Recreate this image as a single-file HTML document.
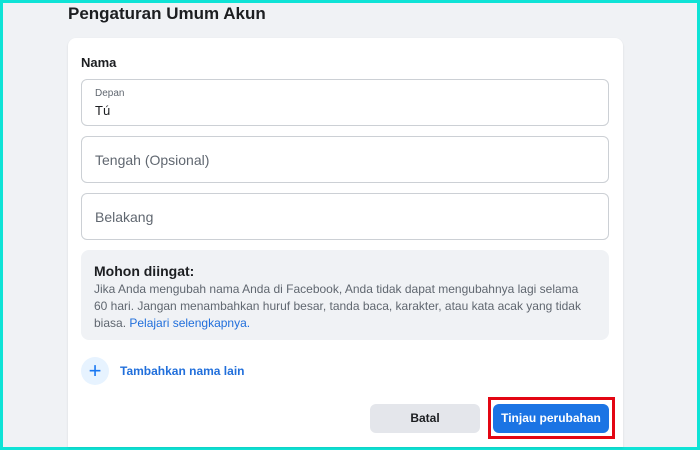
<!DOCTYPE html>
<html><head><style>
*{margin:0;padding:0;box-sizing:border-box}
html,body{width:700px;height:450px;overflow:hidden}
body{background:#0fe3d6;font-family:"Liberation Sans",sans-serif;position:relative}
.bg{position:absolute;left:3px;top:3px;width:694px;height:444px;background:#f0f2f5;overflow:hidden}
.card{position:absolute;left:68px;top:38px;width:555px;height:409px;background:#fff;border-radius:8px 8px 0 0;box-shadow:0 1px 2px rgba(0,0,0,.1)}
h1{position:absolute;left:68px;top:4px;font-size:17px;font-weight:bold;color:#1c1e21}
.lbl{position:absolute;left:81px;top:55px;font-size:13px;font-weight:bold;color:#1c1e21}
.in{position:absolute;left:81px;width:528px;height:47px;border:1px solid #ccd0d5;border-radius:6px;font-size:14px;color:#606770}
.in span{position:absolute;left:13px;top:15px}
.note{position:absolute;left:81px;top:250px;width:528px;height:90px;background:#f0f2f5;border-radius:8px;padding:13px 24px 13px 13px}
.note b{font-size:14px;color:#1c1e21;display:block;margin-bottom:2px}
.note p{font-size:12px;line-height:17px;color:#606770}
.note a{color:#216fdb}
.plus{position:absolute;left:81px;top:357px;width:28px;height:28px;border-radius:50%;background:#e7f3ff;color:#1877f2;font-size:22px;text-align:center;line-height:27px}
.add{position:absolute;left:120px;top:364px;font-size:12px;font-weight:bold;color:#216fdb}
.btn{position:absolute;top:404px;height:29px;border-radius:6px;font-size:12px;font-weight:bold;text-align:center;line-height:29px}
.red{position:absolute;left:488px;top:397px;width:127px;height:42px;border:3px solid #e30613}
</style></head><body>
<div class="bg"></div>
<div class="card"></div>
<h1>Pengaturan Umum Akun</h1>
<div class="lbl">Nama</div>
<div class="in" style="top:79px"><span style="top:8px;font-size:10px">Depan</span><span style="top:23px;color:#1c1e21;font-size:13px">Tú</span></div>
<div class="in" style="top:136px"><span>Tengah (Opsional)</span></div>
<div class="in" style="top:193px"><span>Belakang</span></div>
<div class="note"><b>Mohon diingat:</b><p>Jika Anda mengubah nama Anda di Facebook, Anda tidak dapat mengubahnya lagi selama 60 hari. Jangan menambahkan huruf besar, tanda baca, karakter, atau kata acak yang tidak biasa. <a>Pelajari selengkapnya.</a></p></div>
<div class="plus">+</div>
<div class="add">Tambahkan nama lain</div>
<div class="btn" style="left:370px;width:110px;background:#e4e6eb;color:#1c1e21">Batal</div>
<div class="btn" style="left:493px;width:116px;background:#1b74e4;color:#fff">Tinjau perubahan</div>
<div class="red"></div>
</body></html>
